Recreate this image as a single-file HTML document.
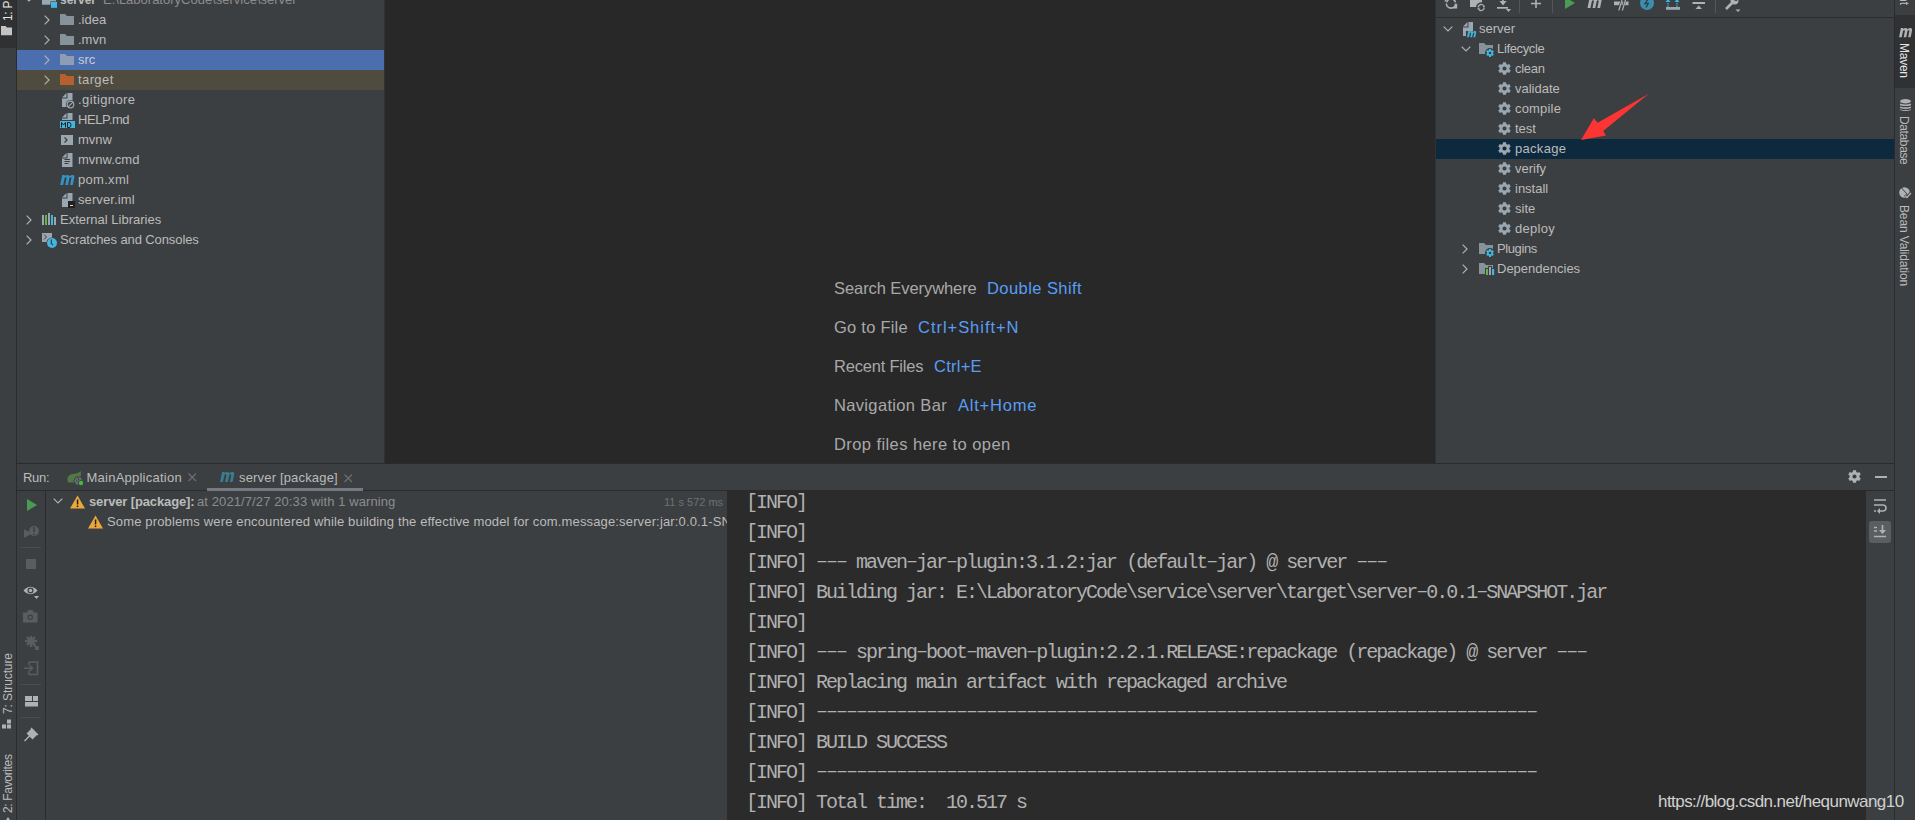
<!DOCTYPE html>
<html><head><meta charset="utf-8">
<style>
*{margin:0;padding:0;box-sizing:border-box}
html,body{width:1915px;height:820px;overflow:hidden;background:#3C3F41;font-family:"Liberation Sans",sans-serif;color:#BBBBBB}
.a{position:absolute}
.t{position:absolute;white-space:nowrap;font-size:13px;line-height:20px}
.row{position:absolute;height:20px}
svg{position:absolute;overflow:visible}
.mono{font-family:"Liberation Mono",monospace}
</style></head><body>
<!-- left stripe -->
<div class="a" style="left:0;top:0;width:16px;height:820px;background:#3C3F41"></div>
<div class="a" style="left:0;top:0;width:16px;height:48px;background:#2F3133"></div>
<div class="a" style="left:16px;top:0;width:1px;height:820px;background:#2B2B2B"></div>

<!-- project panel -->
<div id="proj" class="a" style="left:17px;top:0;width:367px;height:463px;background:#3C3F41"></div>

<!-- project tree -->
<svg width="0" height="0" style="position:absolute">
<defs>
<symbol id="mm" viewBox="0 0 16 11"><path d="M0 11 L2.2 0 H5 L4.8 1 Q6 0 8 0 Q10 0 10.2 1.5 Q11.5 0 13.5 0 Q16 0 15.5 2.5 L13.8 11 H10.8 L12.3 3.5 Q12.5 2.5 11.5 2.5 Q10.3 2.5 10 3.8 L8.5 11 H5.5 L7 3.5 Q7.2 2.5 6.2 2.5 Q5 2.5 4.7 3.8 L3.2 11 Z"/></symbol>
<symbol id="arr" viewBox="0 0 6 10"><path d="M0.7 0.7 L5 5 L0.7 9.3" fill="none" stroke="#AFB1B3" stroke-width="1.2"/></symbol>
<symbol id="arrd" viewBox="0 0 10 6"><path d="M0.7 0.7 L5 5 L9.3 0.7" fill="none" stroke="#AFB1B3" stroke-width="1.2"/></symbol>
<symbol id="fold" viewBox="0 0 14 11"><path d="M0 0 H5 L7 2 H14 V11 H0 Z"/></symbol>
<symbol id="file" viewBox="0 0 11 14"><path d="M0 4.5 L4.5 0 V4.5 Z M5.5 0 H10.5 V14 H0 V5.5 H5.5 Z" fill="#9AA7B0"/></symbol>
</defs></svg>
<div class="a" style="left:17px;top:50px;width:367px;height:20px;background:#4B6EAF"></div>
<div class="a" style="left:17px;top:70px;width:367px;height:20px;background:#4F4B3F"></div>
<svg style="left:24px;top:-4px" width="10" height="6"><use href="#arrd"/></svg>
<svg style="left:42px;top:-8px" width="16" height="16"><path d="M0 0 H14 V12.7 H0Z" fill="#9AA7B0"/><rect x="8.5" y="9.3" width="7" height="7" fill="#3C3F41"/><rect x="9" y="9.8" width="6" height="6" fill="#40B6E0"/></svg>
<div class="t" style="left:60px;top:-10px;font-weight:bold;color:#BBBBBB;font-size:12px">server</div>
<div class="t" style="left:103px;top:-10px;color:#8C8C8C">E:\LaboratoryCode\service\server</div>

<svg style="left:44px;top:15px" width="6" height="10"><use href="#arr"/></svg>
<svg style="left:60px;top:14px" width="14" height="11" fill="#87939A"><use href="#fold"/></svg>
<div class="t" style="left:78px;top:10px">.idea</div>

<svg style="left:44px;top:35px" width="6" height="10"><use href="#arr"/></svg>
<svg style="left:60px;top:34px" width="14" height="11" fill="#87939A"><use href="#fold"/></svg>
<div class="t" style="left:78px;top:30px">.mvn</div>

<svg style="left:44px;top:55px" width="6" height="10"><use href="#arr"/></svg>
<svg style="left:60px;top:54px" width="14" height="11" fill="#8E9DB3"><use href="#fold"/></svg>
<div class="t" style="left:78px;top:50px;color:#C8CCD4">src</div>

<svg style="left:44px;top:75px" width="6" height="10"><use href="#arr"/></svg>
<svg style="left:60px;top:74px" width="14" height="11" fill="#B65F2F"><use href="#fold"/></svg>
<div class="t" style="left:78px;top:70px;letter-spacing:0.4px">target</div>

<svg style="left:62px;top:93px" width="14" height="16"><use href="#file" width="11" height="14"/><circle cx="8.5" cy="11.5" r="4.6" fill="#3C3F41"/><circle cx="8.5" cy="11.5" r="3.3" fill="none" stroke="#9AA7B0" stroke-width="1.2"/><path d="M6.3 13.7 L10.7 9.3" stroke="#9AA7B0" stroke-width="1.2"/></svg>
<div class="t" style="left:78px;top:90px;letter-spacing:0.4px">.gitignore</div>

<svg style="left:62px;top:113px" width="11" height="8"><path d="M0 4.5 L4.5 0 V4.5 Z M5.5 0 H10.5 V7 H0 V5.5 H5.5 Z" fill="#9AA7B0"/></svg>
<div class="a" style="left:60px;top:121px;width:15px;height:7px;background:#40B6E0"></div>
<svg style="left:61px;top:122px" width="13" height="6"><path d="M0.5 5.5 V0.5 L2.5 3 L4.5 0.5 V5.5 M6.5 5.5 V0.5 H8 Q10 0.5 10 3 Q10 5.5 8 5.5 Z" fill="none" stroke="#231F20" stroke-width="1"/></svg>
<div class="t" style="left:78px;top:110px;letter-spacing:-0.4px">HELP.md</div>

<svg style="left:61px;top:135px" width="12" height="10"><rect width="12" height="10" fill="#9AA7B0"/><path d="M3.5 2.5 L6 5 L3.5 7.5" fill="none" stroke="#3C3F41" stroke-width="1.3"/></svg>
<div class="t" style="left:78px;top:130px">mvnw</div>

<svg style="left:62px;top:153px" width="11" height="14"><use href="#file"/><path d="M2.5 6.5 H8 M2.5 8.5 H8 M2.5 10.5 H6.5" stroke="#3C3F41" stroke-width="1"/></svg>
<div class="t" style="left:78px;top:150px">mvnw.cmd</div>

<svg style="left:59.5px;top:175px" width="15" height="10" fill="#3592C4"><use href="#mm"/></svg>
<div class="t" style="left:78px;top:170px;letter-spacing:0.3px">pom.xml</div>

<svg style="left:62px;top:193px" width="14" height="15"><use href="#file" width="11" height="14"/><rect x="6" y="8" width="7" height="7" fill="#231F20"/><rect x="8" y="12" width="3" height="1" fill="#DDDDDD"/></svg>
<div class="t" style="left:78px;top:190px;letter-spacing:0.1px">server.iml</div>

<svg style="left:26px;top:215px" width="6" height="10"><use href="#arr"/></svg>
<svg style="left:42px;top:213px" width="15" height="12"><rect x="0" y="2" width="2" height="10" fill="#9AA7B0"/><rect x="3" y="2" width="2" height="10" fill="#62B543"/><rect x="6" y="0" width="2" height="12" fill="#9AA7B0"/><rect x="9" y="2" width="2" height="10" fill="#40B6E0"/><rect x="12" y="4" width="2" height="8" fill="#9AA7B0"/></svg>
<div class="t" style="left:60px;top:210px">External Libraries</div>

<svg style="left:26px;top:235px" width="6" height="10"><use href="#arr"/></svg>
<svg style="left:42px;top:233px" width="16" height="16"><rect width="10" height="9" fill="#9AA7B0"/><path d="M2 1.5 L4.5 4 L2 6.5" fill="none" stroke="#3C3F41" stroke-width="1"/><circle cx="10" cy="10" r="5.6" fill="#3C3F41"/><circle cx="10" cy="10" r="5" fill="#40B6E0"/><path d="M9.3 6.5 V10.5 L11 12" fill="none" stroke="#3C3F41" stroke-width="1.2"/></svg>
<div class="t" style="left:60px;top:230px;letter-spacing:-0.1px">Scratches and Consoles</div>

<!-- editor -->
<div class="a" style="left:384px;top:0;width:1px;height:463px;background:#323232"></div>
<div id="editor" class="a" style="left:385px;top:0;width:1050px;height:463px;background:#282828"></div>
<div class="a" style="left:1435px;top:0;width:1px;height:463px;background:#313131"></div>

<!-- editor empty text -->
<div class="t" style="left:834px;top:278.3px;font-size:16.5px;color:#A9A9A9;letter-spacing:-0.074px">Search Everywhere</div>
<div class="t" style="left:987px;top:278.3px;font-size:16.5px;color:#589DF6;letter-spacing:0.43px">Double Shift</div>
<div class="t" style="left:834px;top:317.3px;font-size:16.5px;color:#A9A9A9;letter-spacing:0.24px">Go to File</div>
<div class="t" style="left:918px;top:317.3px;font-size:16.5px;color:#589DF6;letter-spacing:0.97px">Ctrl+Shift+N</div>
<div class="t" style="left:834px;top:356.3px;font-size:16.5px;color:#A9A9A9;letter-spacing:-0.21px">Recent Files</div>
<div class="t" style="left:934px;top:356.3px;font-size:16.5px;color:#589DF6;letter-spacing:0.26px">Ctrl+E</div>
<div class="t" style="left:834px;top:395.3px;font-size:16.5px;color:#A9A9A9;letter-spacing:0.34px">Navigation Bar</div>
<div class="t" style="left:958px;top:395.3px;font-size:16.5px;color:#589DF6;letter-spacing:0.785px">Alt+Home</div>
<div class="t" style="left:834px;top:434.3px;font-size:16.5px;color:#A9A9A9;letter-spacing:0.42px">Drop files here to open</div>

<!-- maven panel -->
<div id="maven" class="a" style="left:1436px;top:0;width:458px;height:463px;background:#3C3F41"></div>

<!-- maven panel content -->
<svg width="0" height="0" style="position:absolute"><defs>
<symbol id="gear" viewBox="0 0 13 13"><path d="M4.66 1.96 L5.04 0.17 L7.96 0.17 L8.34 1.96 L9.52 2.64 L11.25 2.07 L12.72 4.60 L11.35 5.82 L11.35 7.18 L12.72 8.40 L11.25 10.93 L9.52 10.36 L8.34 11.04 L7.96 12.83 L5.04 12.83 L4.66 11.04 L3.48 10.36 L1.75 10.93 L0.28 8.40 L1.65 7.18 L1.65 5.82 L0.28 4.60 L1.75 2.07 L3.48 2.64Z M8.60 6.5 A2.1 2.1 0 1 0 4.40 6.5 A2.1 2.1 0 1 0 8.60 6.5Z" fill-rule="evenodd"/></symbol>
</defs></svg>
<div class="a" style="left:1436px;top:17px;width:458px;height:1px;background:#2B2B2B"></div>
<!-- toolbar icons (clipped at top) -->
<svg style="left:1440px;top:-8px" width="20" height="18"><path d="M6.4 11.5 A4.6 4.6 0 0 0 15.6 11.5 M15.44 10.31 A4.6 4.6 0 0 0 6.56 10.31" fill="none" stroke="#AFB1B3" stroke-width="1.6"/><path d="M17.2 11.2 V16.4 L12.8 16.4 Z M4.8 5 V10.3 L9.2 5 Z" fill="#AFB1B3"/></svg>
<svg style="left:1469px;top:-6px" width="18" height="20"><rect x="1" y="0" width="12" height="13" fill="#AFB1B3"/><circle cx="12.2" cy="13.5" r="5.2" fill="#3C3F41"/><path d="M9.2 13 A3 3 0 0 1 14.6 11.7 M15.2 14 A3 3 0 0 1 9.8 15.3" fill="none" stroke="#AFB1B3" stroke-width="1.3"/><rect x="14" y="11.6" width="1.8" height="1.8" fill="#AFB1B3"/><rect x="8.6" y="13.6" width="1.8" height="1.8" fill="#AFB1B3"/></svg>
<svg style="left:1496px;top:-4px" width="16" height="17"><path d="M7 0 V8" stroke="#AFB1B3" stroke-width="1.6"/><path d="M3.5 5 L7 9.5 L10.5 5 Z" fill="#AFB1B3"/><rect x="1" y="11" width="11" height="1.7" fill="#AFB1B3"/><path d="M10 13 L15 13 L12.5 16 Z" fill="#AFB1B3"/></svg>
<div class="a" style="left:1519px;top:0;width:1px;height:13px;background:#555555"></div>
<svg style="left:1530px;top:-2px" width="12" height="12"><path d="M6 0 V10 M1 5.5 H11" stroke="#AFB1B3" stroke-width="1.6"/></svg>
<div class="a" style="left:1552px;top:0;width:1px;height:13px;background:#555555"></div>
<svg style="left:1565px;top:-3px" width="11" height="12"><path d="M0 0 L10 6 L0 12 Z" fill="#499C54"/></svg>
<svg style="left:1587px;top:-2px" width="15.6" height="10" fill="#AFB1B3"><use href="#mm"/></svg>
<svg style="left:1613.5px;top:0px" width="15" height="11"><path d="M0 1.5 H14.5 V5.2 H0 Z" fill="#AFB1B3"/><path d="M4.6 10.5 L7.8 0 M8.1 10.5 L11.3 0" stroke="#3C3F41" stroke-width="2.4"/><path d="M4.8 10.5 L8 0 M8.3 10.5 L11.5 0" stroke="#AFB1B3" stroke-width="1.2"/></svg>
<svg style="left:1640px;top:-4px" width="15" height="15"><circle cx="7" cy="7" r="7" fill="#3D8DAE"/><path d="M8.5 2.5 L5 7.5 H8.3 L6 11.5" fill="none" stroke="#2B3E48" stroke-width="1.3"/></svg>
<svg style="left:1666px;top:-1px" width="15" height="12"><path d="M2 8 V1 M11 8 V1" stroke="#40B6E0" stroke-width="1.2" stroke-dasharray="1.5 1"/><path d="M-0.5 3 L2 0 L4.5 3 Z M8.5 3 L11 0 L13.5 3Z" fill="#40B6E0"/><rect x="0" y="8" width="14" height="2.8" fill="#9AA7B0"/></svg>
<svg style="left:1692px;top:-1px" width="14" height="11"><rect x="0.5" y="3" width="12.5" height="2" fill="#AFB1B3"/><path d="M3.5 10 L6.75 6.5 L10 10 Z" fill="#AFB1B3"/></svg>
<div class="a" style="left:1715px;top:0;width:1px;height:13px;background:#555555"></div>
<svg style="left:1724px;top:-4px" width="18" height="17"><path d="M2 13 L8 7" stroke="#AFB1B3" stroke-width="2.6"/><circle cx="10.5" cy="4.5" r="4" fill="#AFB1B3"/><circle cx="12" cy="3" r="2" fill="#3C3F41"/><path d="M11.5 13.5 H16.5 L14 16 Z" fill="#AFB1B3"/></svg>

<!-- tree -->
<div class="a" style="left:1436px;top:139px;width:458px;height:20px;background:#0D293E"></div>
<svg style="left:1443px;top:26px" width="10" height="6"><use href="#arrd"/></svg>
<svg style="left:1463px;top:22px" width="14" height="16"><path d="M0 4.5 L4.5 0 V4.5 Z M5.5 0 H10 V9 H3 V14 H0 V5.5 H5.5 Z" fill="#9AA7B0"/></svg>
<svg style="left:1466.5px;top:30.5px" width="9.5" height="6.5" fill="#40B6E0"><use href="#mm" preserveAspectRatio="none"/></svg>
<div class="t" style="left:1479px;top:19px">server</div>
<svg style="left:1461px;top:46px" width="10" height="6"><use href="#arrd"/></svg>
<svg style="left:1479px;top:43px" width="16" height="16"><path d="M0 0 H5 L7 2 H14 V7 H10 V11 H0 Z" fill="#87939A"/><circle cx="11" cy="10" r="5" fill="#3C3F41"/><use href="#gear" x="7" y="6" width="8" height="8" fill="#40B6E0"/></svg>
<div class="t" style="left:1497px;top:39px;letter-spacing:-0.35px">Lifecycle</div>
<svg style="left:1497.5px;top:62px" width="13" height="13" fill="#9AA7B0"><use href="#gear"/></svg>
<div class="t" style="left:1515px;top:59px;letter-spacing:-0.3px">clean</div>
<svg style="left:1497.5px;top:82px" width="13" height="13" fill="#9AA7B0"><use href="#gear"/></svg>
<div class="t" style="left:1515px;top:79px">validate</div>
<svg style="left:1497.5px;top:102px" width="13" height="13" fill="#9AA7B0"><use href="#gear"/></svg>
<div class="t" style="left:1515px;top:99px;letter-spacing:0.18px">compile</div>
<svg style="left:1497.5px;top:122px" width="13" height="13" fill="#9AA7B0"><use href="#gear"/></svg>
<div class="t" style="left:1515px;top:119px">test</div>
<svg style="left:1497.5px;top:142px" width="13" height="13" fill="#9AA7B0"><use href="#gear"/></svg>
<div class="t" style="left:1515px;top:139px;letter-spacing:0.3px">package</div>
<svg style="left:1497.5px;top:162px" width="13" height="13" fill="#9AA7B0"><use href="#gear"/></svg>
<div class="t" style="left:1515px;top:159px">verify</div>
<svg style="left:1497.5px;top:182px" width="13" height="13" fill="#9AA7B0"><use href="#gear"/></svg>
<div class="t" style="left:1515px;top:179px">install</div>
<svg style="left:1497.5px;top:202px" width="13" height="13" fill="#9AA7B0"><use href="#gear"/></svg>
<div class="t" style="left:1515px;top:199px">site</div>
<svg style="left:1497.5px;top:222px" width="13" height="13" fill="#9AA7B0"><use href="#gear"/></svg>
<div class="t" style="left:1515px;top:219px;letter-spacing:0.3px">deploy</div>
<svg style="left:1462px;top:244px" width="6" height="10"><use href="#arr"/></svg>
<svg style="left:1479px;top:243px" width="16" height="16"><path d="M0 0 H5 L7 2 H14 V7 H10 V11 H0 Z" fill="#87939A"/><circle cx="11" cy="10" r="5" fill="#3C3F41"/><use href="#gear" x="7" y="6" width="8" height="8" fill="#40B6E0"/></svg>
<div class="t" style="left:1497px;top:239px;letter-spacing:-0.4px">Plugins</div>
<svg style="left:1462px;top:264px" width="6" height="10"><use href="#arr"/></svg>
<svg style="left:1479px;top:263px" width="17" height="16"><path d="M0 0 H5 L7 2 H14 V11 H0 Z" fill="#87939A"/><path d="M6 5 H9 V3 H13 V5 H16 V13 H6 Z" fill="#3C3F41"/><rect x="7" y="6" width="2" height="6" fill="#62B543"/><rect x="10" y="4" width="2" height="8" fill="#9AA7B0"/><rect x="13" y="6" width="2.2" height="6" fill="#40B6E0"/></svg>
<div class="t" style="left:1497px;top:259px;letter-spacing:0px">Dependencies</div>

<svg style="left:0;top:0" width="1915" height="820"><path d="M1581 140 L1593.8 118.3 L1597.6 122.8 L1648.8 93.8 L1603.2 131 L1606 135.6 Z" fill="#FC3434"/></svg>
<!-- right stripe -->
<div class="a" style="left:1894px;top:0;width:1px;height:820px;background:#2B2B2B"></div>
<div class="a" style="left:1895px;top:0;width:20px;height:820px;background:#3C3F41"></div>

<!-- horizontal divider -->
<div class="a" style="left:17px;top:463px;width:1877px;height:1px;background:#2B2B2B"></div>
<!-- run panel -->
<div id="run" class="a" style="left:17px;top:464px;width:1877px;height:356px;background:#3C3F41"></div>
<div class="a" style="left:17px;top:490px;width:1877px;height:1px;background:#2B2B2B"></div>
<div class="a" style="left:45px;top:491px;width:1px;height:329px;background:#2B2B2B"></div>
<div id="console" class="a" style="left:727px;top:491px;width:1139px;height:329px;background:#2B2B2B"></div>



<!-- stripe labels -->
<svg style="left:1px;top:26px" width="12" height="10"><path d="M0 0 H4.5 L6 1.5 H11 V9.3 H0 Z" fill="#C4C4C4"/></svg>
<div class="t" style="left:0.5px;top:21px;font-size:12px;line-height:14px;color:#E6E6E6;transform:rotate(-90deg);transform-origin:0 0;letter-spacing:-0.3px">1: Project</div>

<svg style="left:2px;top:719px" width="10" height="11"><rect x="0" y="5.5" width="4" height="4" fill="#AFB1B3"/><rect x="5" y="5.5" width="4" height="4" fill="#AFB1B3"/><rect x="5" y="0.5" width="4" height="4" fill="#AFB1B3"/></svg>
<div class="t" style="left:0.5px;top:714px;font-size:12px;line-height:14px;color:#BBBBBB;transform:rotate(-90deg);transform-origin:0 0;letter-spacing:-0.09px">7: Structure</div>
<div class="t" style="left:0.5px;top:813px;font-size:12px;line-height:14px;color:#BBBBBB;transform:rotate(-90deg);transform-origin:0 0;letter-spacing:-0.34px">2: Favorites</div>
<svg style="left:4px;top:817px" width="8" height="6"><path d="M4 0 L8 6 H0 Z" fill="#AFB1B3"/></svg>

<div class="a" style="left:1895px;top:15px;width:20px;height:73px;background:#2F3133"></div>
<div class="t" style="left:1911px;top:-13px;font-size:12px;line-height:14px;color:#BBBBBB;transform:rotate(90deg);transform-origin:0 0">Ant</div>
<div class="t" style="left:1897px;top:24px;font:italic bold 13px/14px 'Liberation Sans';color:#AFB1B3;letter-spacing:-1px;transform:rotate(90deg);transform-origin:0 0;"></div>
<svg style="left:1898.5px;top:27.5px" width="13.5" height="9.5" fill="#AFB1B3"><use href="#mm" preserveAspectRatio="none"/></svg>
<div class="t" style="left:1911px;top:43px;font-size:12px;line-height:14px;color:#E6E6E6;transform:rotate(90deg);transform-origin:0 0;letter-spacing:-0.26px">Maven</div>
<svg style="left:1900px;top:99px" width="11" height="13"><ellipse cx="5.5" cy="2.2" rx="5.5" ry="2.2" fill="#AFB1B3"/><path d="M0 4.6 Q5.5 6.4 11 4.6 V6.2 Q5.5 8 0 6.2 Z M0 7.4 Q5.5 9.2 11 7.4 V9 Q5.5 10.8 0 9 Z M0 10.2 Q5.5 12 11 10.2 V11 Q5.5 13 0 11 Z" fill="#AFB1B3"/></svg>
<div class="t" style="left:1911px;top:115.5px;font-size:12px;line-height:14px;color:#BBBBBB;transform:rotate(90deg);transform-origin:0 0;letter-spacing:-0.37px">Database</div>
<svg style="left:1899px;top:187px" width="13" height="13"><circle cx="5.5" cy="5.5" r="5.3" fill="#AFB1B3"/><path d="M2.5 1 L8.5 7.5" stroke="#3C3F41" stroke-width="1"/><path d="M6 8 L8 10 L12 5.5" fill="none" stroke="#3C3F41" stroke-width="2.6"/><path d="M6 8.5 L8 10.5 L12 6" fill="none" stroke="#AFB1B3" stroke-width="1.3"/></svg>
<div class="t" style="left:1911px;top:204.5px;font-size:12px;line-height:14px;color:#BBBBBB;transform:rotate(90deg);transform-origin:0 0;letter-spacing:-0.14px">Bean Validation</div>

<!-- run panel content -->
<div class="t" style="left:23px;top:468px;letter-spacing:-0.3px">Run:</div>
<svg style="left:66px;top:469px" width="20" height="18"><path d="M2 13.5 C0.5 9 2 5.5 7 5 C11 4.5 13 3.5 14.6 2 C15.2 5 15 7 14 9 L8 13.5 Z" fill="#4F7A46"/><path d="M17.00 11.90 L14.70 15.88 L10.10 15.88 L7.80 11.90 L10.10 7.92 L14.70 7.92Z" fill="#6E737A" stroke="#3C3F41" stroke-width="1"/><path d="M10.6 10.6 A2 2 0 1 0 14.2 10.6 M12.4 8.5 V11.5" fill="none" stroke="#3C3F41" stroke-width="1"/><circle cx="15" cy="14" r="2.8" fill="#3C3F41"/><circle cx="15" cy="14" r="2.2" fill="#3CBF3C"/></svg>
<div class="t" style="left:86.5px;top:468px;letter-spacing:0.24px">MainApplication</div>
<svg style="left:188px;top:473px" width="9" height="9"><path d="M0.5 0.5 L8 8 M8 0.5 L0.5 8" stroke="#6E7072" stroke-width="1.1"/></svg>
<svg style="left:219.5px;top:472px" width="14.7" height="10" fill="#3B7C91"><use href="#mm"/></svg>
<div class="t" style="left:239px;top:468px;letter-spacing:0.17px">server [package]</div>
<svg style="left:344px;top:474px" width="9" height="9"><path d="M0.5 0.5 L8 8 M8 0.5 L0.5 8" stroke="#6E7072" stroke-width="1.1"/></svg>
<div class="a" style="left:207px;top:488px;width:156px;height:3px;background:#747A80"></div>
<!-- header right icons -->
<svg style="left:1848px;top:470px" width="13" height="13" fill="#AFB1B3"><use href="#gear"/></svg>
<div class="a" style="left:1875px;top:476px;width:12px;height:2px;background:#AFB1B3"></div>

<!-- run tree -->
<svg style="left:53px;top:498px" width="10" height="6"><use href="#arrd"/></svg>
<svg style="left:70px;top:495px" width="16" height="14"><path d="M7.5 0.5 L15 13.5 H0 Z" fill="#EBA83A"/><rect x="6.8" y="4.5" width="1.5" height="5" fill="#231F20"/><rect x="6.8" y="10.5" width="1.5" height="1.6" fill="#231F20"/></svg>
<div class="t" style="left:89px;top:492px;font-weight:bold;letter-spacing:-0.13px">server [package]:</div>
<div class="t" style="left:197px;top:492px;color:#8C8C8C;letter-spacing:0.1px">at 2021/7/27 20:33 with 1 warning</div>
<div class="t" style="left:664px;top:492px;color:#707070;font-size:11px">11 s 572 ms</div>
<svg style="left:88px;top:515px" width="16" height="14"><path d="M7.5 0.5 L15 13.5 H0 Z" fill="#EBA83A"/><rect x="6.8" y="4.5" width="1.5" height="5" fill="#231F20"/><rect x="6.8" y="10.5" width="1.5" height="1.6" fill="#231F20"/></svg>
<div class="a" style="left:46px;top:511px;width:681px;height:20px;overflow:hidden"><div class="t" style="left:61px;top:1px;letter-spacing:0.15px">Some problems were encountered while building the effective model for com.message:server:jar:0.0.1-SNAPSHOT</div></div>

<!-- left run toolbar -->
<svg style="left:27px;top:499px" width="10" height="12"><path d="M0 0 L10 6 L0 12 Z" fill="#499C54"/></svg>
<svg style="left:23.5px;top:524.5px" width="15" height="15"><path d="M0 4 L8 8.5 L0 13 Z" fill="#5A5D5F"/><circle cx="10" cy="6" r="5" fill="#5A5D5F"/><path d="M10 2 V7 M10 8.5 V10" stroke="#3C3F41" stroke-width="1.5"/></svg>
<div class="a" style="left:21px;top:547px;width:20px;height:1px;background:#4A4D4F"></div>
<div class="a" style="left:26px;top:559px;width:10px;height:10px;background:#5A5D5F"></div>
<svg style="left:23px;top:585px" width="17" height="15"><path d="M0.5 5.5 Q7.5 -2 14.5 5.5 Q7.5 13 0.5 5.5 Z" fill="#AFB1B3"/><circle cx="7.5" cy="5.5" r="3" fill="#3C3F41"/><circle cx="7.5" cy="5.5" r="1.7" fill="#AFB1B3"/><path d="M11 11 H16 L13.5 14 Z" fill="#AFB1B3"/></svg>
<svg style="left:23px;top:610px" width="15" height="13"><path d="M0 2.5 H4 L5.5 0 H9.5 L11 2.5 H14.5 V12.5 H0 Z" fill="#5A5D5F"/><circle cx="7.3" cy="7.3" r="2.7" fill="#3C3F41"/><circle cx="7.3" cy="7.3" r="1.5" fill="#5A5D5F"/></svg>
<svg style="left:24px;top:634px" width="15" height="16"><path d="M3 3 L11 11 M3 11 L11 3 M1 7 H13 M7 2 V13" stroke="#5A5D5F" stroke-width="2.4"/><path d="M9 10 L14 15 M11 15 H14 V12" stroke="#5A5D5F" stroke-width="1.8" fill="none"/></svg>
<svg style="left:24px;top:661px" width="15" height="15"><path d="M5 1 H13.5 V13.5 H5 M5 1 V4 M5 10 V13.5" fill="none" stroke="#5A5D5F" stroke-width="1.6"/><path d="M0 7.2 H8 M5.5 4.5 L8.5 7.2 L5.5 10" fill="none" stroke="#5A5D5F" stroke-width="1.6"/></svg>
<div class="a" style="left:21px;top:684px;width:20px;height:1px;background:#4A4D4F"></div>
<svg style="left:25px;top:696px" width="13" height="11"><rect x="0" y="0" width="7" height="5" fill="#AFB1B3"/><rect x="8" y="0" width="5" height="5" fill="#AFB1B3"/><rect x="0" y="6" width="13" height="4.5" fill="#AFB1B3"/></svg>
<div class="a" style="left:21px;top:717px;width:20px;height:1px;background:#4A4D4F"></div>
<svg style="left:24px;top:727px" width="15" height="15"><path d="M0.5 14 L6 8.5" stroke="#AFB1B3" stroke-width="1.4"/><path d="M3.5 6.5 L8 2 L13 7 L8.5 11.5 Z M7 1 L14 8" fill="#AFB1B3" stroke="#AFB1B3" stroke-width="1.3"/></svg>

<!-- right run toolbar -->
<svg style="left:1874px;top:499px" width="13" height="14"><path d="M0 1 H12 M0 6 H8.5 Q12 6 12 9 Q12 12 8.5 12 H5 M0 12 H2" fill="none" stroke="#AFB1B3" stroke-width="1.6"/><path d="M6 9 L3 12 L6 15 Z" fill="#AFB1B3"/></svg>
<div class="a" style="left:1869px;top:521px;width:22px;height:22px;background:#5A5E61;border-radius:3px"></div>
<svg style="left:1874px;top:525px" width="13" height="13"><path d="M0 2.5 H3 M0 6 H3 M0 11.5 H12" stroke="#AFB1B3" stroke-width="1.6"/><path d="M8.5 0 V8" stroke="#AFB1B3" stroke-width="1.6"/><path d="M5 5 L8.5 9 L12 5 Z" fill="#AFB1B3"/></svg>
<div class="a mono" style="left:746px;top:488px;width:1117px;height:332px;overflow:hidden;font-size:20px;line-height:30px;letter-spacing:-2px;color:#B0B0B0;white-space:pre">[INFO]
[INFO]
[INFO] <span style="position:relative;top:-1.5px">‒‒‒</span> maven<span style="position:relative;top:-1.5px">‒</span>jar<span style="position:relative;top:-1.5px">‒</span>plugin:3.1.2:jar (default<span style="position:relative;top:-1.5px">‒</span>jar) @ server <span style="position:relative;top:-1.5px">‒‒‒</span>
[INFO] Building jar: E:\LaboratoryCode\service\server\target\server<span style="position:relative;top:-1.5px">‒</span>0.0.1<span style="position:relative;top:-1.5px">‒</span>SNAPSHOT.jar
[INFO]
[INFO] <span style="position:relative;top:-1.5px">‒‒‒</span> spring<span style="position:relative;top:-1.5px">‒</span>boot<span style="position:relative;top:-1.5px">‒</span>maven<span style="position:relative;top:-1.5px">‒</span>plugin:2.2.1.RELEASE:repackage (repackage) @ server <span style="position:relative;top:-1.5px">‒‒‒</span>
[INFO] Replacing main artifact with repackaged archive
[INFO] <span style="position:relative;top:-1.5px">‒‒‒‒‒‒‒‒‒‒‒‒‒‒‒‒‒‒‒‒‒‒‒‒‒‒‒‒‒‒‒‒‒‒‒‒‒‒‒‒‒‒‒‒‒‒‒‒‒‒‒‒‒‒‒‒‒‒‒‒‒‒‒‒‒‒‒‒‒‒‒‒</span>
[INFO] BUILD SUCCESS
[INFO] <span style="position:relative;top:-1.5px">‒‒‒‒‒‒‒‒‒‒‒‒‒‒‒‒‒‒‒‒‒‒‒‒‒‒‒‒‒‒‒‒‒‒‒‒‒‒‒‒‒‒‒‒‒‒‒‒‒‒‒‒‒‒‒‒‒‒‒‒‒‒‒‒‒‒‒‒‒‒‒‒</span>
[INFO] Total time:  10.517 s</div>
<div class="t" style="left:1658px;top:791.5px;font-size:17px;line-height:20px;color:#D0D0D0;letter-spacing:-0.55px">https://blog.csdn.net/hequnwang10</div>

</body></html>
